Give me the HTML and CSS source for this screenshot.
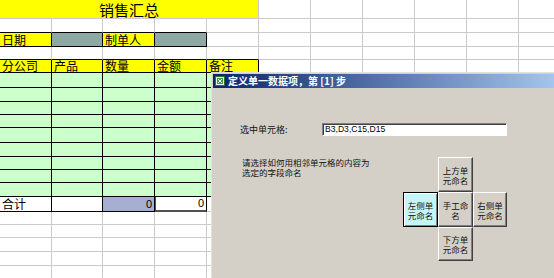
FILE: index.html
```html
<!doctype html>
<html lang="zh-CN">
<head>
  <meta charset="UTF-8">
  <title>销售汇总</title>
  <link rel="stylesheet" href="styles.css">
</head>
<body>

  <div class="sheet">
    <div class="c title">销售汇总</div><div class="c"></div><div class="c"></div><div class="c"></div><div class="c"></div><div class="c"></div><div class="c"></div>
    <div class="c kb"></div><div class="c kb"></div><div class="c kb"></div><div class="c kb"></div><div class="c"></div><div class="c"></div><div class="c"></div><div class="c"></div><div class="c"></div><div class="c"></div><div class="c"></div>
    <div class="c k y">日期</div><div class="c k t"></div><div class="c k y">制单人</div><div class="c k t"></div><div class="c"></div><div class="c"></div><div class="c"></div><div class="c"></div><div class="c"></div><div class="c"></div><div class="c"></div>
    <div class="c kb"></div><div class="c kb"></div><div class="c kb"></div><div class="c kb"></div><div class="c kb"></div><div class="c"></div><div class="c"></div><div class="c"></div><div class="c"></div><div class="c"></div><div class="c"></div>
    <div class="c k y">分公司</div><div class="c k y">产品</div><div class="c k y">数量</div><div class="c k y">金额</div><div class="c k y">备注</div><div class="c"></div><div class="c"></div><div class="c"></div><div class="c"></div><div class="c"></div><div class="c"></div>
    <div class="c k g"></div><div class="c k g"></div><div class="c k g"></div><div class="c k g"></div><div class="c k g"></div><div class="c"></div><div class="c"></div><div class="c"></div><div class="c"></div><div class="c"></div><div class="c"></div>
    <div class="c k g"></div><div class="c k g"></div><div class="c k g"></div><div class="c k g"></div><div class="c k g"></div><div class="c"></div><div class="c"></div><div class="c"></div><div class="c"></div><div class="c"></div><div class="c"></div>
    <div class="c k g"></div><div class="c k g"></div><div class="c k g"></div><div class="c k g"></div><div class="c k g"></div><div class="c"></div><div class="c"></div><div class="c"></div><div class="c"></div><div class="c"></div><div class="c"></div>
    <div class="c k g"></div><div class="c k g"></div><div class="c k g"></div><div class="c k g"></div><div class="c k g"></div><div class="c"></div><div class="c"></div><div class="c"></div><div class="c"></div><div class="c"></div><div class="c"></div>
    <div class="c k g"></div><div class="c k g"></div><div class="c k g"></div><div class="c k g"></div><div class="c k g"></div><div class="c"></div><div class="c"></div><div class="c"></div><div class="c"></div><div class="c"></div><div class="c"></div>
    <div class="c k g"></div><div class="c k g"></div><div class="c k g"></div><div class="c k g"></div><div class="c k g"></div><div class="c"></div><div class="c"></div><div class="c"></div><div class="c"></div><div class="c"></div><div class="c"></div>
    <div class="c k g"></div><div class="c k g"></div><div class="c k g"></div><div class="c k g"></div><div class="c k g"></div><div class="c"></div><div class="c"></div><div class="c"></div><div class="c"></div><div class="c"></div><div class="c"></div>
    <div class="c k g"></div><div class="c k g"></div><div class="c k g"></div><div class="c k g"></div><div class="c k g"></div><div class="c"></div><div class="c"></div><div class="c"></div><div class="c"></div><div class="c"></div><div class="c"></div>
    <div class="c k g"></div><div class="c k g"></div><div class="c k g"></div><div class="c k g"></div><div class="c k g"></div><div class="c"></div><div class="c"></div><div class="c"></div><div class="c"></div><div class="c"></div><div class="c"></div>
    <div class="c k">合计</div><div class="c k"></div><div class="c k l n">0</div><div class="c k sel n">0</div><div class="c"></div><div class="c"></div><div class="c"></div><div class="c"></div><div class="c"></div><div class="c"></div><div class="c"></div>
    <div class="c"></div><div class="c"></div><div class="c"></div><div class="c"></div><div class="c"></div><div class="c"></div><div class="c"></div><div class="c"></div><div class="c"></div><div class="c"></div><div class="c"></div>
    <div class="c"></div><div class="c"></div><div class="c"></div><div class="c"></div><div class="c"></div><div class="c"></div><div class="c"></div><div class="c"></div><div class="c"></div><div class="c"></div><div class="c"></div>
    <div class="c"></div><div class="c"></div><div class="c"></div><div class="c"></div><div class="c"></div><div class="c"></div><div class="c"></div><div class="c"></div><div class="c"></div><div class="c"></div><div class="c"></div>
    <div class="c"></div><div class="c"></div><div class="c"></div><div class="c"></div><div class="c"></div><div class="c"></div><div class="c"></div><div class="c"></div><div class="c"></div><div class="c"></div><div class="c"></div>
    <div class="c"></div><div class="c"></div><div class="c"></div><div class="c"></div><div class="c"></div><div class="c"></div><div class="c"></div><div class="c"></div><div class="c"></div><div class="c"></div><div class="c"></div>
  </div>

  <div class="dlg">
    <div class="bar">
      <svg width="10" height="10" viewBox="0 0 10 10">
        <rect x="0.5" y="0.5" width="9" height="9" fill="#e8f4e8" stroke="#2f6f3a"/>
        <rect x="2" y="2" width="6" height="6" fill="#3f9a4a"/>
        <path d="M3 3 L7 7 M7 3 L3 7" stroke="#fff" stroke-width="1"/>
      </svg>
      <span>定义单一数据项，第 [1] 步</span>
    </div>

    <div class="body">
      <div class="row">
        <span class="lbl">选中单元格:</span>
        <div class="inp">B3,D3,C15,D15</div>
      </div>

      <div class="pick">
        <p>请选择如何用相邻单元格的内容为<br>选定的字段命名</p>
        <div class="cross">
          <button class="btn up">上方单<br>元命名</button>
          <button class="btn left on">左侧单<br>元命名</button>
          <button class="btn mid">手工命<br>名</button>
          <button class="btn right">右侧单<br>元命名</button>
          <button class="btn down">下方单<br>元命名</button>
        </div>
      </div>
    </div>
  </div>

</body>
</html>
```

FILE: styles.css
```css
html, body {
  margin: 0;
  padding: 0;
}
body {
  width: 554px;
  height: 278px;
  overflow: hidden;
  position: relative;
  background: #fff;
  font-family: "Noto Sans CJK SC", sans-serif;
  color: #000;
}

/* the worksheet: every cell draws its own right and bottom gridline */
.sheet {
  display: grid;
  grid-template-columns: 52px 51px repeat(9, 52px);
  grid-template-rows: 19px 14px 14px 13px 13px 15px 14px 13px 13px 15px 14px 13px 13px 14px 15px 13px 13px 14px 14px 14px;
}
.c {
  box-sizing: border-box;
  border-right: 1px solid #cbcbcb;
  border-bottom: 1px solid #cbcbcb;
  font-size: 12px;
  line-height: 1;
  padding: 0 2px;
  display: flex;
  align-items: center;
  white-space: nowrap;
}
.title {
  grid-column: span 5;
  background: #ffff00;
  font-size: 15px;
  justify-content: center;
}
.k { border-color: #000; }
.kb { border-bottom-color: #000; }
.y { background: #ffff00; }
.t { background: #8ea9a4; }
.g { background: #ccffcc; }
.l { background: #a6aed2; }
.n {
  justify-content: flex-end;
  font-family: "Liberation Sans", sans-serif;
  font-size: 11px;
}
.sel {
  border-bottom: 2px solid #505050;
  box-shadow: inset 1px 0 #505050;
}

/* the dialog window lying over the sheet */
.dlg {
  position: absolute;
  left: 211px;
  top: 72px;
  width: 350px;
  height: 215px;
  background: #d4d0c8;
  border-top: 1px solid #e4e1da;
  border-left: 1px solid #e4e1da;
  padding: 1px 0 0 1px;
}
.bar {
  height: 14px;
  background: linear-gradient(to right, #0a246a, #a6caf0);
  display: flex;
  align-items: center;
  gap: 3px;
  padding-left: 2px;
  color: #fff;
  font-weight: bold;
  font-size: 10px;
  line-height: 14px;
  white-space: pre;
}
.bar svg { display: block; }

.body {
  width: 267px;
  padding: 35px 0 0 27px;
  font-size: 9px;
  line-height: 10px;
  color: #111;
}
.row {
  display: flex;
  align-items: center;
}
.lbl { width: 82px; }
.inp {
  box-sizing: border-box;
  width: 185px;
  height: 13px;
  background: #fff;
  border: 1px solid;
  border-color: #808080 #fff #fff #808080;
  box-shadow: inset 1px 1px #404040;
  font-family: "Liberation Sans", sans-serif;
  font-size: 8.6px;
  line-height: 11px;
  padding-left: 2px;
  color: #000;
}

.pick {
  display: flex;
  justify-content: space-between;
  align-items: flex-start;
  margin-top: 21px;
}
.pick p {
  margin: 0;
  padding-left: 2px;
  font-size: 8.5px;
}
.cross {
  display: grid;
  grid-template-columns: 35px 35px 34px;
  grid-template-rows: 35px 35px 34px;
}
.btn {
  box-sizing: border-box;
  margin: 0;
  padding: 0;
  font-family: inherit;
  font-size: 8.5px;
  line-height: 10px;
  color: #111;
  background: #d4d0c8;
  border: 1px solid;
  border-color: #fff #404040 #404040 #fff;
  box-shadow: inset -1px -1px #808080;
}
.btn.on {
  background: #c4f6f8;
  border-color: #000;
  box-shadow: inset 1px 1px #fff, inset -1px -1px #808080;
}
.up { grid-column: 2; grid-row: 1; }
.left { grid-column: 1; grid-row: 2; }
.mid { grid-column: 2; grid-row: 2; }
.right { grid-column: 3; grid-row: 2; }
.down { grid-column: 2; grid-row: 3; }
```
